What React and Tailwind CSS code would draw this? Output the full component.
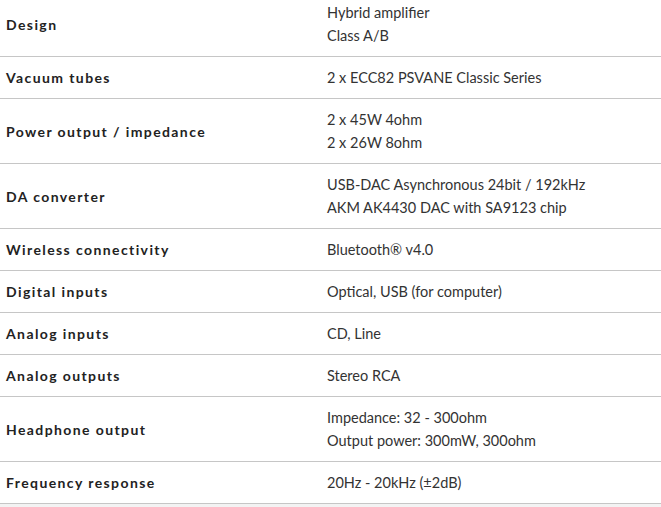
const specs = [
  { label: "Design", values: ["Hybrid amplifier", "Class A/B"] },
  { label: "Vacuum tubes", values: ["2 x ECC82 PSVANE Classic Series"] },
  { label: "Power output / impedance", values: ["2 x 45W 4ohm", "2 x 26W 8ohm"] },
  { label: "DA converter", values: ["USB-DAC Asynchronous 24bit / 192kHz", "AKM AK4430 DAC with SA9123 chip"] },
  { label: "Wireless connectivity", values: ["Bluetooth® v4.0"] },
  { label: "Digital inputs", values: ["Optical, USB (for computer)"] },
  { label: "Analog inputs", values: ["CD, Line"] },
  { label: "Analog outputs", values: ["Stereo RCA"] },
  { label: "Headphone output", values: ["Impedance: 32 - 300ohm", "Output power: 300mW, 300ohm"] },
  { label: "Frequency response", values: ["20Hz - 20kHz (±2dB)"] },
];

const SpecRow = ({ label, values, first }) => {
  return (
    <div className={`grid grid-cols-[327px_1fr] items-center border-b border-[#c6c6c6] py-[9px] ${first ? "-mt-[8px]" : ""}`}>
      <div className="pl-[6px] text-[14px] font-bold tracking-[1.4px] text-[#222]">{label}</div>
      <div className="text-[14.5px] leading-[23px] text-[#333]">
        {values.map((v) => (
          <div key={v}>{v}</div>
        ))}
      </div>
    </div>
  );
};

export default function App() {
  return (
    <div className="h-[507px] w-[661px] overflow-hidden bg-white font-['Lato',sans-serif]">
      {/* spec table */}
      {specs.map((s, i) => (
        <SpecRow key={s.label} label={s.label} values={s.values} first={i === 0} />
      ))}
      <div className="h-[10px] bg-[#f3f3f3]"></div>
    </div>
  );
}
